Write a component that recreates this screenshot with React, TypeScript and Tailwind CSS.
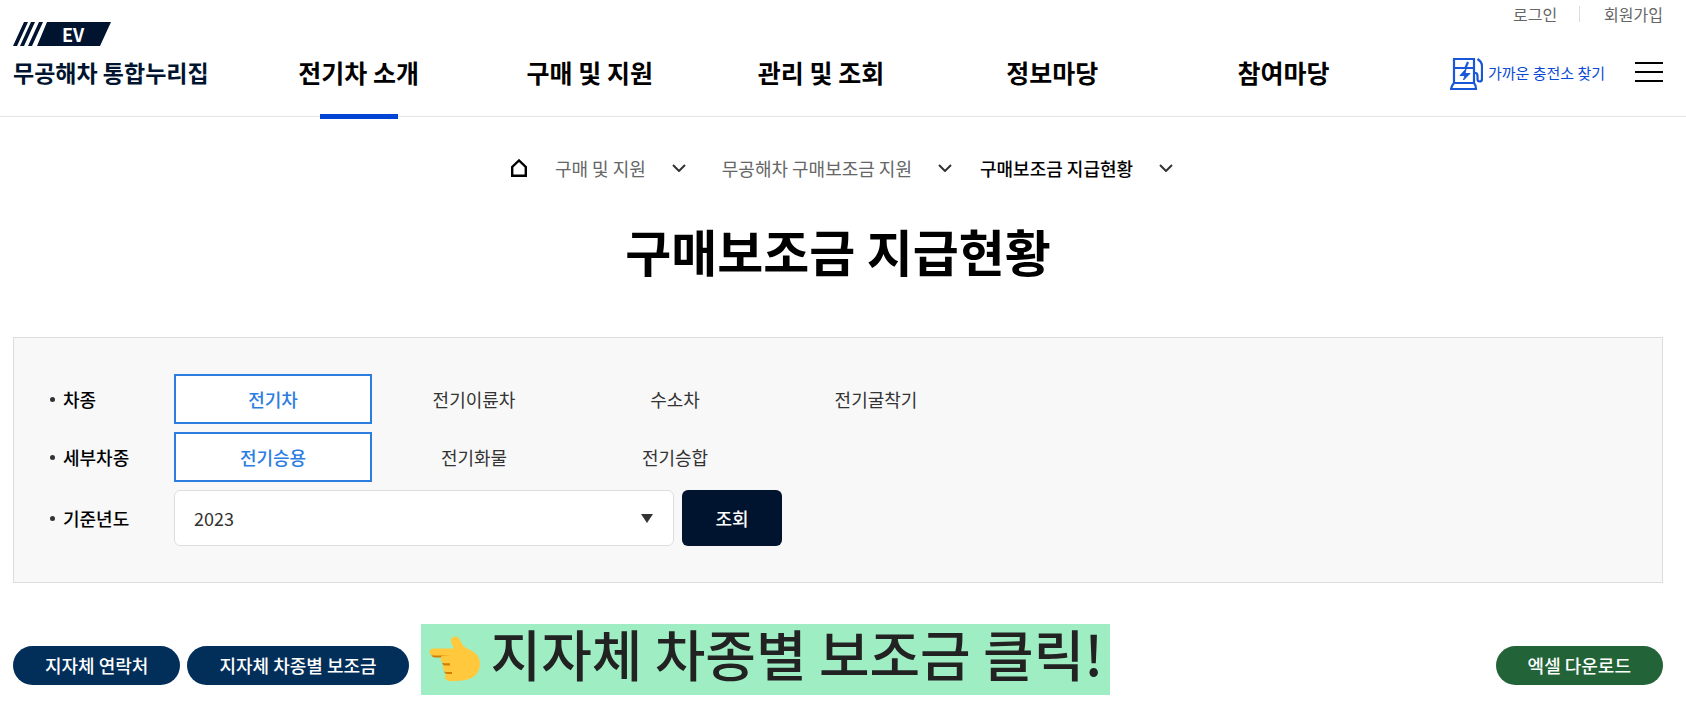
import { useState } from "react";

const menus = ["전기차 소개", "구매 및 지원", "관리 및 조회", "정보마당", "참여마당"];
const vehicles = ["전기차", "전기이륜차", "수소차", "전기굴착기"];
const details = ["전기승용", "전기화물", "전기승합"];

function Logo() {
  return (
    <a href="#" className="flex w-[230px] flex-col pt-[22px] text-[#001430]">
      <span className="relative flex h-6 w-[98px] items-center justify-center">
        <svg viewBox="0 0 98 24" className="absolute inset-0 h-6 w-[98px]" fill="currentColor" aria-hidden="true">
          <path d="M0 24 11 0h4L4 24zM7 24 18 0h4L11 24zM15 24 26 0h4L19 24zM24 24 34 0h64L87 24z" />
        </svg>
        <span className="relative pl-[22px] text-[18px] leading-[22px] font-bold text-white">EV</span>
      </span>
      <span className="mt-[10px] text-[23px] leading-8 font-bold whitespace-nowrap">무공해차 통합누리집</span>
    </a>
  );
}

function ChargerIcon() {
  return (
    <svg viewBox="0 0 33 32" className="h-8 w-[33px]" fill="none" stroke="#1a56d8" strokeWidth="2.200" aria-hidden="true">
      <path d="M4 25V1h20v24" />
      <path d="M4 10h20M4 25h20q2 2 2 6H1q1-4 3-6z" />
      <path d="M24 15h1.500q2 0 2 3v3q0 2.500 2.200 2.500T32 21V8q0-4-4.500-7" />
      <path d="m18 4-3 7" />
      <path d="M16 11 10 17.500h5L13.500 22 20 15.500h-5z" fill="#1a56d8" strokeWidth="1" />
    </svg>
  );
}

function Chevron() {
  return (
    <svg viewBox="0 0 14 8" className="h-2 w-[14px]" fill="none" stroke="#333" strokeWidth="2" aria-hidden="true">
      <path d="M1 1l6 6 6-6" />
    </svg>
  );
}

function PointingHand() {
  return (
    <svg viewBox="0 0 52 46" className="h-[46px] w-[52px]" aria-hidden="true">
      <path d="M2 18q1 3.500 4 3.500h13l5-3zM13 27q1 3 3 3h5v-3zM15 35.500q1 2.500 3 2.500h5v-2.500z" fill="#d67d00" />
      <path
        d="M5 12.500h18c2 0 2-1 .5-3.500C21 5 21.500 1 25.500.5c3-.3 5 1.500 6 4.500 1.500 4 4.500 7 8.500 8.500C47 16 51 21.500 51 28c0 10.500-8 16-20 16.700l-10 .5c-4 0-6-3.200-4.500-7.200H23v-2h-6c-2.500-1-4-3.500-3-6.500h7V27.300h-6c-3-1-4-4.300-2.500-7.300L22 19.500H5c-6-.3-6-7 0-7z"
        fill="#ffc83d"
      />
    </svg>
  );
}

function RowLabel({ text, htmlFor }: { text: string; htmlFor?: string }) {
  const cls = "flex w-[124px] shrink-0 items-center gap-2 text-[18px] leading-7 font-medium text-black";
  const dot = <span className="size-[5px] rounded-full bg-[#333]" />;
  return htmlFor ? (
    <label htmlFor={htmlFor} className={cls}>{dot}{text}</label>
  ) : (
    <span className={cls}>{dot}{text}</span>
  );
}

function Options({ label, items }: { label: string; items: string[] }) {
  const [selected, setSelected] = useState(items[0]);
  return (
    <div className="flex items-center" role="group" aria-label={label}>
      <RowLabel text={label} />
      <div className="flex flex-wrap gap-[3px]">
        {items.map((item) => (
          <button
            key={item}
            type="button"
            aria-pressed={item === selected}
            onClick={() => setSelected(item)}
            className={
              item === selected
                ? "h-[50px] w-[198px] border-2 border-[#2b7de1] bg-white text-[18px] font-medium text-[#2b7de1]"
                : "h-[50px] w-[198px] border-2 border-transparent text-[18px] text-[#333]"
            }
          >
            {item}
          </button>
        ))}
      </div>
    </div>
  );
}

export default function App() {
  return (
    <div className="bg-white pb-6 font-['Noto_Sans_CJK_KR','Noto_Sans',sans-serif] text-[#333]">
      <header className="flex border-b border-[#e5e5e5] pr-[23px] pl-[13px]">
        <Logo />
        <nav className="grid flex-1 grid-cols-5 pt-[52px]">
          {menus.map((menu, i) => (
            <a key={menu} href="#" className="relative flex h-16 justify-center text-[25px] leading-10 font-bold whitespace-nowrap text-black">
              {menu}
              {i === 0 && <span className="absolute -bottom-[3px] h-[5px] w-[78px] bg-[#0044d6]" />}
            </a>
          ))}
        </nav>
        <div className="flex w-[264px] flex-col items-end">
          <div className="flex h-7 items-center text-[16px] text-[#666]">
            <a href="#">로그인</a>
            <span className="mr-6 ml-[22px] h-4 w-px bg-[#ddd]" />
            <a href="#">회원가입</a>
          </div>
          <div className="flex h-[88px] items-start pt-[30px]">
            <a href="#" className="flex items-center gap-[5px] text-[15px] leading-[22px] whitespace-nowrap text-[#0a49d4]">
              <ChargerIcon />
              <span className="pb-[3px]">가까운 충전소 찾기</span>
            </a>
            <button type="button" aria-label="전체메뉴" className="mt-1 ml-[30px] flex h-5 w-7 flex-col justify-between">
              <span className="h-[2px] w-full bg-black" />
              <span className="h-[2px] w-full bg-black" />
              <span className="h-[2px] w-full bg-black" />
            </button>
          </div>
        </div>
      </header>

      <main className="pr-[23px] pl-[13px]">
        <nav className="flex items-center justify-center pt-[37px] pl-2 text-[18px] leading-7 text-[#666]">
          <a href="#" aria-label="홈" className="mr-7">
            <svg viewBox="0 0 16 18" className="h-[18px] w-4" fill="none" stroke="#000" strokeWidth="2.400" aria-hidden="true">
              <path d="M1.200 16.800V8L8 1.500 14.800 8v8.800z" />
            </svg>
          </a>
          <button type="button" className="mr-9 flex items-center gap-[26px]">구매 및 지원 <Chevron /></button>
          <button type="button" className="mr-7 flex items-center gap-[26px]">무공해차 구매보조금 지원 <Chevron /></button>
          <button type="button" className="flex items-center gap-[26px] font-medium text-black">구매보조금 지급현황 <Chevron /></button>
        </nav>

        <h1 className="mt-[30px] text-center text-[50px] leading-[76px] font-bold text-black">구매보조금 지급현황</h1>

        <form className="mt-[49px] flex flex-col gap-2 border border-[#ddd] bg-[#f8f8f8] p-9" onSubmit={(e) => e.preventDefault()}>
          <Options label="차종" items={vehicles} />
          <Options label="세부차종" items={details} />
          <div className="flex items-center">
            <RowLabel text="기준년도" htmlFor="year" />
            <div className="relative mr-2 w-[500px]">
              <select id="year" defaultValue="2023" className="h-14 w-full appearance-none rounded-md border border-[#ddd] bg-white px-[19px] text-[18px] text-[#333]">
                <option>2023</option>
                <option>2022</option>
                <option>2021</option>
              </select>
              <svg viewBox="0 0 12 9" className="pointer-events-none absolute top-6 right-[21px] h-[9px] w-3" fill="#333" aria-hidden="true">
                <path d="M0 0h12L6 9z" />
              </svg>
            </div>
            <button type="submit" className="h-14 w-[100px] rounded-md bg-[#001430] text-[18px] font-medium text-white">조회</button>
          </div>
        </form>

        <div className="mt-[41px] flex items-start">
          <button type="button" className="mt-[22px] mr-[7px] h-[39px] rounded-full bg-[#022f5a] px-8 text-[18px] font-medium whitespace-nowrap text-white">지자체 연락처</button>
          <button type="button" className="mt-[22px] mr-3 h-[39px] rounded-full bg-[#022f5a] px-8 text-[18px] font-medium whitespace-nowrap text-white">지자체 차종별 보조금</button>
          <p className="flex h-[71px] w-[689px] items-start gap-[10px] bg-[#9feec3] pl-2 text-[55px] leading-[56px] font-medium whitespace-nowrap text-[#222]">
            <span className="pt-3"><PointingHand /></span>
            지자체 차종별 보조금 클릭!
          </p>
          <button type="button" className="mt-[22px] ml-auto h-[39px] rounded-full bg-[#226437] px-8 text-[18px] font-medium whitespace-nowrap text-white">엑셀 다운로드</button>
        </div>
      </main>
    </div>
  );
}
